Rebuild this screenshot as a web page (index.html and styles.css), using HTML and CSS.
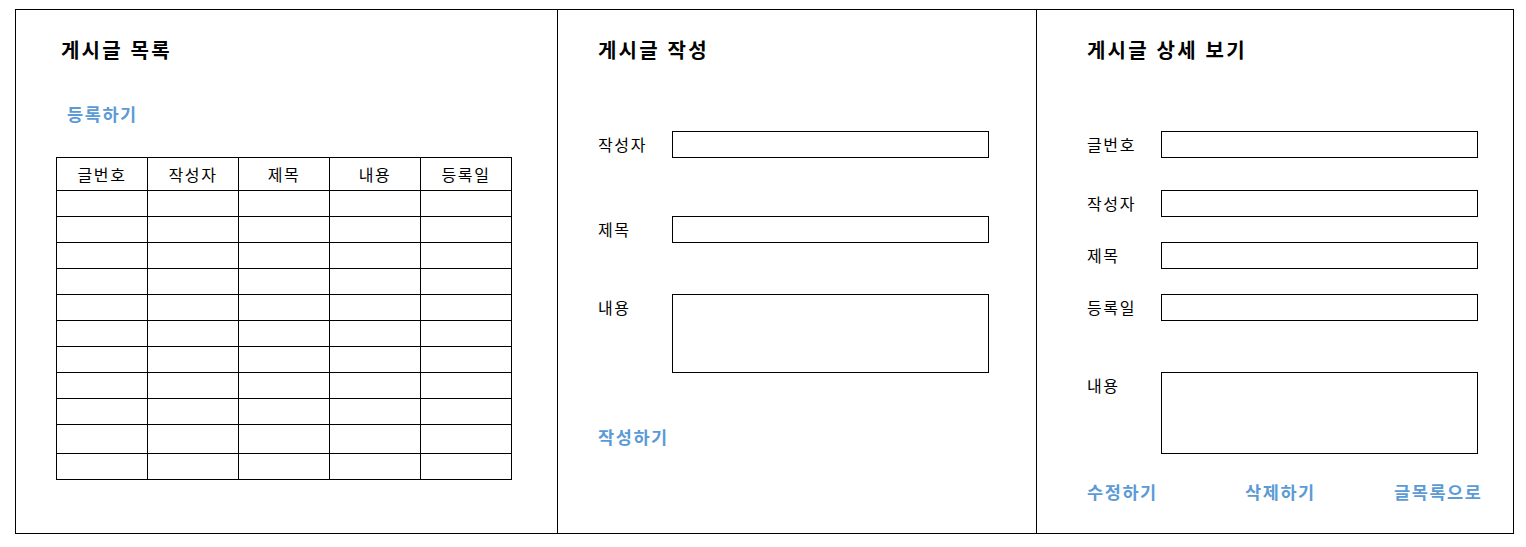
FILE: index.html
```html
<!DOCTYPE html>
<html lang="ko">
<head>
    <meta charset="UTF-8">
    <meta name="viewport" content="width=device-width, initial-scale=1.0">
    <title>게시판</title>
    <link rel="stylesheet" href="styles.css">
</head>
<body>
    <div class="board">
        <section class="panel panel-list">
            <h2 class="title">게시글 목록</h2>
            <a class="link link-add" href="#">등록하기</a>
            <table class="list">
                <thead>
                    <tr><th>글번호</th><th>작성자</th><th>제목</th><th>내용</th><th>등록일</th></tr>
                </thead>
                <tbody>
                    <tr><td></td><td></td><td></td><td></td><td></td></tr>
                    <tr><td></td><td></td><td></td><td></td><td></td></tr>
                    <tr><td></td><td></td><td></td><td></td><td></td></tr>
                    <tr><td></td><td></td><td></td><td></td><td></td></tr>
                    <tr><td></td><td></td><td></td><td></td><td></td></tr>
                    <tr><td></td><td></td><td></td><td></td><td></td></tr>
                    <tr><td></td><td></td><td></td><td></td><td></td></tr>
                    <tr><td></td><td></td><td></td><td></td><td></td></tr>
                    <tr><td></td><td></td><td></td><td></td><td></td></tr>
                    <tr class="tall"><td></td><td></td><td></td><td></td><td></td></tr>
                    <tr><td></td><td></td><td></td><td></td><td></td></tr>
                </tbody>
            </table>
        </section>

        <section class="panel panel-write">
            <h2 class="title">게시글 작성</h2>
            <div class="field w-writer">
                <label for="w-writer">작성자</label>
                <input type="text" id="w-writer">
            </div>
            <div class="field w-subject">
                <label for="w-subject">제목</label>
                <input type="text" id="w-subject">
            </div>
            <div class="field w-content">
                <label for="w-content">내용</label>
                <textarea id="w-content"></textarea>
            </div>
            <a class="link link-write" href="#">작성하기</a>
        </section>

        <section class="panel panel-detail">
            <h2 class="title">게시글 상세 보기</h2>
            <div class="field d-no">
                <label for="d-no">글번호</label>
                <input type="text" id="d-no">
            </div>
            <div class="field d-writer">
                <label for="d-writer">작성자</label>
                <input type="text" id="d-writer">
            </div>
            <div class="field d-subject">
                <label for="d-subject">제목</label>
                <input type="text" id="d-subject">
            </div>
            <div class="field d-date">
                <label for="d-date">등록일</label>
                <input type="text" id="d-date">
            </div>
            <div class="field d-content">
                <label for="d-content">내용</label>
                <textarea id="d-content" class="tall-box"></textarea>
            </div>
            <div class="actions">
                <a class="link" href="#">수정하기</a>
                <a class="link" href="#">삭제하기</a>
                <a class="link" href="#">글목록으로</a>
            </div>
        </section>
    </div>
</body>
</html>
```

FILE: styles.css
```css
*,
*::before,
*::after {
    box-sizing: border-box;
}
body {
    margin: 0;
    font-family: "Noto Sans CJK KR", "Noto Sans", sans-serif;
    color: #000;
    background-color: #fff;
}
.board {
    display: flex;
    margin: 9px 0 0 15px;
    width: 1499px;
    height: 525px;
    border: 1px solid #000;
}
.panel {
    display: flex;
    flex-direction: column;
    align-items: flex-start;
    padding-top: 26px;
}
.panel-list {
    width: 542px;
    padding-left: 40px;
    border-right: 1px solid #000;
}
.panel-write {
    width: 479px;
    padding-left: 40px;
    border-right: 1px solid #000;
}
.panel-detail {
    flex: 1;
    padding-left: 50px;
}
.title {
    margin: 0;
    font-size: 20px;
    line-height: 28px;
    font-weight: bold;
    letter-spacing: 2.2px;
}
.panel-list .title {
    margin-left: 5px;
}
.link {
    font-size: 17.5px;
    line-height: 24px;
    font-weight: bold;
    letter-spacing: 1.6px;
    color: #5b9bd5;
    text-decoration: none;
}
.link-add {
    margin: 38px 0 0 11px;
}
.list {
    margin-top: 31px;
    width: 456px;
    table-layout: fixed;
    border-collapse: collapse;
}
.list th,
.list td {
    border: 1px solid #000;
    padding: 0;
    font-size: 16px;
    font-weight: normal;
    letter-spacing: 1.6px;
    text-align: center;
}
.list thead tr {
    height: 33px;
}
.list tbody tr {
    height: 26px;
}
.list tbody tr.tall {
    height: 29px;
}
.field {
    display: grid;
    grid-template-columns: 74px 317px;
    align-items: start;
}
.field label {
    font-size: 16px;
    line-height: 27px;
    letter-spacing: 1.6px;
}
.field input,
.field textarea {
    display: block;
    margin: 0;
    padding: 0;
    width: 317px;
    height: 27px;
    border: 1px solid #000;
    border-radius: 0;
    resize: none;
    font: inherit;
}
.field textarea {
    height: 79px;
}
.field textarea.tall-box {
    height: 82px;
}
.w-writer { margin-top: 67px; }
.w-subject { margin-top: 58px; }
.w-content { margin-top: 51px; }
.link-write { margin-top: 52px; }

.d-no { margin-top: 67px; }
.d-writer { margin-top: 32px; }
.d-subject { margin-top: 25px; }
.d-date { margin-top: 25px; }
.d-content { margin-top: 51px; }
.actions {
    display: grid;
    grid-template-columns: 158px 149px auto;
    margin-top: 26px;
}
```
